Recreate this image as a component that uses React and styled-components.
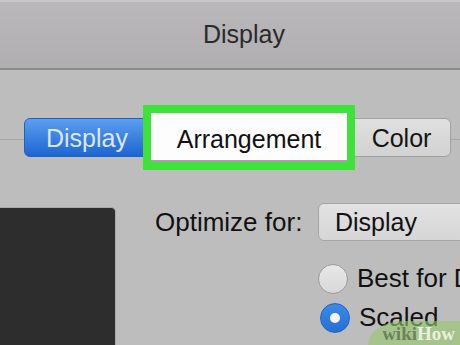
import styled, { createGlobalStyle } from "styled-components";

const GlobalStyle = createGlobalStyle`
  html, body {
    margin: 0;
    padding: 0;
    background: #bebdbe;
  }
`;

const Window = styled.div`
  position: relative;
  width: 460px;
  height: 345px;
  overflow: hidden;
  background: #bebdbe;
  font-family: "Liberation Sans", Arial, sans-serif;
  color: #141414;
`;

const TitleBar = styled.div`
  height: 70px;
  display: flex;
  align-items: center;
  justify-content: center;
  padding-left: 28px;
  box-sizing: border-box;
  background: linear-gradient(to bottom, #bab8ba, #b0aeb0);
  box-shadow: inset 0 2px 0 #cac8ca;
  border-bottom: 2px solid #8c8b8c;
  font-size: 25px;
  color: #2a2a2a;
`;

const TabRow = styled.div`
  margin-top: 35px;
  height: 65px;
  display: flex;
  align-items: center;
  padding-left: 24px;
  background: linear-gradient(
    to bottom,
    transparent 34px,
    #a8a7a8 34px,
    #a8a7a8 35px,
    transparent 35px
  );
`;

const Tab = styled.div`
  flex: none;
  height: 39px;
  box-sizing: border-box;
  display: flex;
  align-items: center;
  justify-content: center;
  font-size: 25px;
  padding-top: 2px;
  width: ${(p) => p.$width}px;
  border-radius: ${(p) => p.$radius};
  background: ${(p) =>
    p.$active
      ? "linear-gradient(to bottom, #5c9ef0, #1d65d1)"
      : "linear-gradient(to bottom, #e0e0e0, #d2d2d2)"};
  border: 1px solid ${(p) => (p.$active ? "#2160c0" : "#a2a1a2")};
  color: ${(p) => (p.$active ? "#dbe8fb" : "#141414")};
  padding-left: ${(p) => p.$pad || 0}px;
`;

const Highlight = styled.div`
  flex: none;
  position: relative;
  z-index: 1;
  margin: 0 -7px;
  width: 212px;
  height: 65px;
  box-sizing: border-box;
  border: 8px solid #3fe23b;
  background: #fdfdfd;
  box-shadow: inset 0 -2px 0 #a3a3a3;
  display: flex;
  align-items: center;
  justify-content: center;
  padding-top: 4px;
  font-size: 25px;
  color: #111;
`;

const Body = styled.div`
  display: flex;
  align-items: flex-start;
`;

const Preview = styled.div`
  flex: none;
  margin-top: 37px;
  width: 116px;
  height: 150px;
  box-sizing: border-box;
  background: #2d2d2d;
  border: 1px solid #a9a9a9;
  border-left: none;
  border-top-right-radius: 5px;
`;

const Form = styled.div`
  flex: none;
  margin-top: 33px;
  margin-left: 39px;
  display: grid;
  grid-template-columns: 163px 200px;
  align-items: center;
`;

const Label = styled.div`
  font-size: 26px;
  color: #111;
`;

const Popup = styled.div`
  width: 170px;
  height: 38px;
  box-sizing: border-box;
  display: flex;
  align-items: center;
  padding-left: 16px;
  border: 1px solid #a6a5a6;
  border-radius: 6px;
  background: linear-gradient(to bottom, #e2e2e2, #d6d6d6);
  font-size: 25px;
  color: #111;
`;

const RadioList = styled.div`
  grid-column: 2;
  margin-top: 22px;
  display: flex;
  flex-direction: column;
  gap: 8px;
`;

const RadioRow = styled.div`
  display: flex;
  align-items: center;
  gap: 9px;
  font-size: 26px;
  color: #111;
  white-space: nowrap;
  padding-left: ${(p) => p.$shift || 0}px;
`;

const Radio = styled.div`
  width: 30px;
  height: 30px;
  box-sizing: border-box;
  border-radius: 50%;
  flex: none;
  display: flex;
  align-items: center;
  justify-content: center;
  background: ${(p) =>
    p.$checked
      ? "linear-gradient(to bottom, #3d8ae6, #2370d4)"
      : "linear-gradient(to bottom, #e8e8e8, #d8d8d8)"};
  border: 1px solid ${(p) => (p.$checked ? "#2464c2" : "#9d9c9d")};

  &::after {
    content: "";
    display: ${(p) => (p.$checked ? "block" : "none")};
    width: 10px;
    height: 10px;
    border-radius: 50%;
    background: #f4f4f4;
  }
`;

const Watermark = styled.div`
  position: absolute;
  right: 0;
  bottom: 0;
  width: 92px;
  height: 24px;
  border-top-left-radius: 36px 24px;
  background: rgba(150, 200, 110, 0.62);
  display: flex;
  align-items: flex-end;
  justify-content: flex-end;
  padding-right: 5px;
  padding-bottom: 2px;
  box-sizing: border-box;
  font-family: "Liberation Serif", "DejaVu Serif", serif;
  font-weight: bold;
  font-size: 19px;
  line-height: 1;
`;

const Wiki = styled.span`
  color: rgba(70, 82, 60, 0.6);
`;

const How = styled.span`
  color: rgba(245, 250, 238, 0.85);
`;

export default function App() {
  return (
    <>
      <GlobalStyle />
      <Window>
        <TitleBar>Display</TitleBar>
        <TabRow>
          <Tab $active $width={126} $radius="6px 0 0 6px">
            Display
          </Tab>
          <Highlight>Arrangement</Highlight>
          <Tab $width={103} $radius="0 6px 6px 0" $pad={4}>
            Color
          </Tab>
        </TabRow>
        <Body>
          <Preview />
          <Form>
            <Label>Optimize for:</Label>
            <Popup>Display</Popup>
            <RadioList>
              <RadioRow>
                <Radio />
                Best for Display
              </RadioRow>
              <RadioRow $shift={2}>
                <Radio $checked />
                Scaled
              </RadioRow>
            </RadioList>
          </Form>
        </Body>
        <Watermark>
          <Wiki>wiki</Wiki>
          <How>How</How>
        </Watermark>
      </Window>
    </>
  );
}
